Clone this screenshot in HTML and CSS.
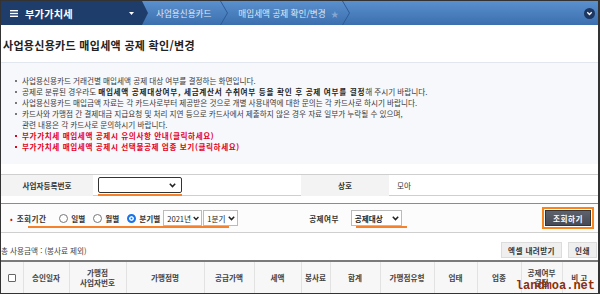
FILE: index.html
```html
<!DOCTYPE html>
<html lang="ko">
<head>
    <meta charset="UTF-8">
    <title>사업용신용카드 매입세액 공제 확인/변경</title>
    <link rel="stylesheet" href="styles.css">
</head>
<body>
<div class="page">
    <!-- 상단 메뉴 -->
    <header class="topbar">
        <div class="menu-home">
            <svg class="burger" width="8" height="7" viewBox="0 0 8 7"><rect y="0" width="8" height="1.4" fill="#fff"/><rect y="2.8" width="8" height="1.4" fill="#fff"/><rect y="5.6" width="8" height="1.4" fill="#fff"/></svg>
            <span class="menu-name">부가가치세</span>
            <svg class="caret" width="5" height="3" viewBox="0 0 5 3"><path d="M0 0 H5 L2.5 3 Z" fill="#fff"/></svg>
        </div>
        <nav class="crumbs">
            <span class="crumb">사업용신용카드</span>
            <svg class="sep" width="8" height="24" viewBox="0 0 8 24"><path d="M0.5 0 L7.5 12 L0.5 24" fill="none" stroke="#2d5c97" stroke-width="1"/></svg>
            <span class="crumb">매입세액 공제 확인/변경</span>
            <span class="star">★</span>
            <svg class="sep" width="8" height="24" viewBox="0 0 8 24"><path d="M0.5 0 L7.5 12 L0.5 24" fill="none" stroke="#2d5c97" stroke-width="1"/></svg>
        </nav>
        <svg class="expand" width="11" height="11" viewBox="0 0 11 11"><circle cx="5.5" cy="5.5" r="5.5" fill="#1d3760"/><path d="M3.3 4.3 L5.5 6.5 L7.7 4.3" fill="none" stroke="#fff" stroke-width="1.3"/></svg>
    </header>

    <h1 class="title">사업용신용카드 매입세액 공제 확인/변경</h1>

    <!-- 안내문 -->
    <ul class="notice">
        <li>사업용신용카드 거래건별 매입세액 공제 대상 여부를 결정하는 화면입니다.</li>
        <li>공제로 분류된 경우라도 <b>매입세액 공제대상여부, 세금계산서 수취여부 등을 확인 후 공제 여부를 결정</b>해 주시기 바랍니다.</li>
        <li>사업용신용카드 매입금액 자료는 각 카드사로부터 제공받은 것으로 개별 사용내역에 대한 문의는 각 카드사로 하시기 바랍니다.</li>
        <li>카드사와 가맹점 간 결제대금 지급요청 및 처리 지연 등으로 카드사에서 제출하지 않은 경우 자료 일부가 누락될 수 있으며,<br>관련 내용은 각 카드사로 문의하시기 바랍니다.</li>
        <li class="red">부가가치세 매입세액 공제시 유의사항 안내(클릭하세요)</li>
        <li class="red">부가가치세 매입세액 공제시 선택불공제 업종 보기(클릭하세요)</li>
    </ul>

    <!-- 사업자 정보 -->
    <div class="form-row">
        <div class="label">사업자등록번호</div>
        <div class="value">
            <div class="marked">
                <div class="select biz">
                    <svg width="7" height="5" viewBox="0 0 7 5"><path d="M0.8 0.8 L3.5 3.6 L6.2 0.8" fill="none" stroke="#222" stroke-width="1.5"/></svg>
                </div>
            </div>
        </div>
        <div class="label">상호</div>
        <div class="value">모아</div>
    </div>

    <!-- 조회 조건 -->
    <div class="search">
        <span class="req">•</span>
        <span class="field-name">조회기간</span>
        <label class="radio"><span class="dot"></span>일별</label>
        <label class="radio"><span class="dot"></span>월별</label>
        <label class="radio"><span class="dot on"></span>분기별</label>
        <div class="select small year">2021년
            <svg width="7" height="5" viewBox="0 0 7 5"><path d="M0.8 0.8 L3.5 3.6 L6.2 0.8" fill="none" stroke="#222" stroke-width="1.5"/></svg>
        </div>
        <div class="select small qtr">1분기
            <svg width="7" height="5" viewBox="0 0 7 5"><path d="M0.8 0.8 L3.5 3.6 L6.2 0.8" fill="none" stroke="#222" stroke-width="1.5"/></svg>
        </div>
        <span class="field-name deduct">공제여부</span>
        <div class="select small kind">공제대상
            <svg width="7" height="5" viewBox="0 0 7 5"><path d="M0.8 0.8 L3.5 3.6 L6.2 0.8" fill="none" stroke="#222" stroke-width="1.5"/></svg>
        </div>
        <div class="btn-wrap"><button class="btn-search">조회하기</button></div>
        <span class="mark period"></span>
        <span class="mark kind-mark"></span>
    </div>

    <div class="summary">
        <span>총 사용금액 : (봉사료 제외)</span>
        <button class="btn-gray excel">엑셀 내려받기</button>
        <button class="btn-gray">인쇄</button>
    </div>

    <table class="list">
        <colgroup>
            <col style="width:22px"><col style="width:46px"><col style="width:57px"><col style="width:78px">
            <col style="width:50px"><col style="width:47px"><col style="width:29px"><col style="width:50px">
            <col style="width:54px"><col style="width:43px"><col style="width:44px"><col style="width:41px"><col>
        </colgroup>
        <thead>
            <tr>
                <th><span class="check"></span></th>
                <th>승인일자</th>
                <th>가맹점<br>사업자번호</th>
                <th>가맹점명</th>
                <th>공급가액</th>
                <th>세액</th>
                <th>봉사료</th>
                <th>합계</th>
                <th>가맹점유형</th>
                <th>업태</th>
                <th>업종</th>
                <th>공제여부<br>결정</th>
                <th class="spaced">비고</th>
            </tr>
        </thead>
    </table>

    <div class="watermark">landmoa.net</div>
</div>
</body>
</html>
```

FILE: styles.css
```css
* { box-sizing: border-box; }
body { margin: 0; font-family: "Noto Sans CJK KR", "Noto Sans", sans-serif; font-size: 7.6px; color: #333; background: #fff; }
.page { position: relative; width: 600px; height: 294px; border: 1px solid #333; border-right-width: 2px; overflow: hidden; }

/* 상단 메뉴 */
.topbar { display: flex; align-items: center; height: 24px; background: linear-gradient(#5b90cf, #3b6fae); }
.menu-home { display: flex; align-items: center; width: 147px; height: 100%; padding-left: 9px; background: #1f3d6b; color: #fff; clip-path: polygon(0 0, 141px 0, 147px 50%, 141px 100%, 0 100%); }
.burger { margin-right: 7px; }
.menu-name { font-size: 10.2px; font-weight: bold; letter-spacing: 0.2px; }
.caret { margin-left: 56px; }
.crumbs { display: flex; align-items: center; height: 100%; margin-left: 8px; color: #dfe8f5; }
.crumb { font-size: 8.6px; }
.crumbs .sep { margin: 0 10px 0 9px; }
.star { margin: 0 1px 0 5px; color: #86a6d0; font-size: 8px; }
.crumbs .sep:last-child { margin-left: 2px; }
.expand { margin: 0 3px 0 auto; }

.title { margin: 13px 0 0 2px; font-size: 11px; line-height: 14px; font-weight: bold; color: #222; letter-spacing: 0.3px; }

/* 안내문 */
.notice { margin: 10px 0 0; padding: 12px 0 12px; list-style: none; background: #f6f8fc; border-top: 1px solid #e2e6ee; line-height: 11px; color: #3a3a3a; }
.notice li { padding-left: 21px; }
.notice li::before { content: ""; display: inline-block; width: 2px; height: 2px; margin: 0 5px 2px -7px; background: #777; vertical-align: middle; }
.notice b { color: #222; letter-spacing: 0.7px; }
.notice .red { color: #e3001b; font-weight: bold; letter-spacing: 0.6px; }
.notice .red::before { background: #e3001b; }

/* 사업자 정보 */
.form-row { display: grid; grid-template-columns: 92px 208px 88px 1fr; height: 22px; margin-top: 10px; border-top: 1px solid #cfcfcf; border-bottom: 1px solid #cfcfcf; }
.form-row .label { display: flex; align-items: center; justify-content: center; background: #f3f3f3; color: #333; font-weight: bold; }
.form-row .value { display: flex; align-items: center; padding-left: 8px; }
.form-row .value:nth-child(2) { padding-left: 5px; }
.marked { padding-bottom: 1px; border-bottom: 2px solid #f5822a; margin-top: 2px; }
.select { display: flex; align-items: center; justify-content: space-between; background: #fff; color: #222; white-space: nowrap; flex-shrink: 0; }
.select.biz { width: 84px; height: 16px; padding: 0 5px; border: 1px solid #333; border-radius: 2px; justify-content: flex-end; }

/* 조회 조건 */
.search { position: relative; display: flex; align-items: center; height: 30px; margin-top: 7px; padding-left: 9px; background: #fcfcfc; border-top: 1px solid #8c8c8c; border-bottom: 1px solid #cfcfcf; white-space: nowrap; }
.req { color: #e3001b; margin-right: 4px; font-size: 8px; }
.field-name { color: #333; font-weight: bold; letter-spacing: 0.4px; margin-right: 13px; }
.radio { display: flex; align-items: center; margin-right: 8px; color: #333; font-weight: bold; }
.dot { width: 9px; height: 9px; margin-right: 3px; border: 1px solid #777; border-radius: 50%; background: #fff; }
.dot.on { border: 2.5px solid #1a73e8; box-shadow: inset 0 0 0 1.5px #fff; background: #1a73e8; }
.select.small { height: 16px; padding: 0 2px 0 3px; border: 1px solid #bbb; }
.select.small svg { margin-left: 2px; }
.year { width: 39px; margin-left: -5px; }
.qtr { width: 35px; margin-left: 1px; margin-right: 71px; }
.deduct { margin-right: 12px; }
.kind { width: 51px; border-color: #ddd; font-weight: bold; }
.btn-wrap { margin-left: auto; margin-right: 4px; padding: 1px; border: 2px solid #f7851c; }
.btn-search { display: block; width: 46px; height: 16px; padding: 0; border: 1px solid #333; background: linear-gradient(#5d626c, #474b55); color: #fff; font: bold 7.6px "Noto Sans CJK KR", sans-serif; letter-spacing: 0.5px; }
.mark { position: absolute; height: 2px; background: #f5822a; bottom: 4px; }
.mark.period { left: 27px; width: 201px; }
.mark.kind-mark { left: 355px; width: 51px; }

/* 합계/버튼 */
.summary { display: flex; align-items: center; gap: 6px; height: 16px; margin-top: 9px; color: #444; }
.summary span { margin-right: auto; }
.btn-gray { height: 16px; padding: 0 6px; border: 1px solid #dcdcdc; background: #efefef; color: #333; font: bold 7.6px "Noto Sans CJK KR", sans-serif; letter-spacing: 0.4px; white-space: nowrap; }
.btn-gray.excel { width: 61px; }
.btn-gray:last-child { width: 29px; margin-right: 1px; }

/* 목록 */
.list { width: 597px; margin-top: 2px; border-collapse: collapse; table-layout: fixed; border-top: 2px solid #7a7a7a; }
.list th { height: 32px; padding: 0; background: #f7f7f7; border-right: 1px solid #e2e2e2; color: #444; font-weight: bold; line-height: 10px; text-align: center; }
.list th:last-child { border-right: 0; }
.list .spaced { letter-spacing: 2px; }
.check { display: inline-block; width: 8px; height: 8px; border: 1px solid #666; border-radius: 1px; background: #fff; vertical-align: middle; }

.watermark { position: absolute; right: 3px; bottom: 0; color: #8b2e0c; font: bold 12px "Liberation Mono", monospace; line-height: 14px; }
```
